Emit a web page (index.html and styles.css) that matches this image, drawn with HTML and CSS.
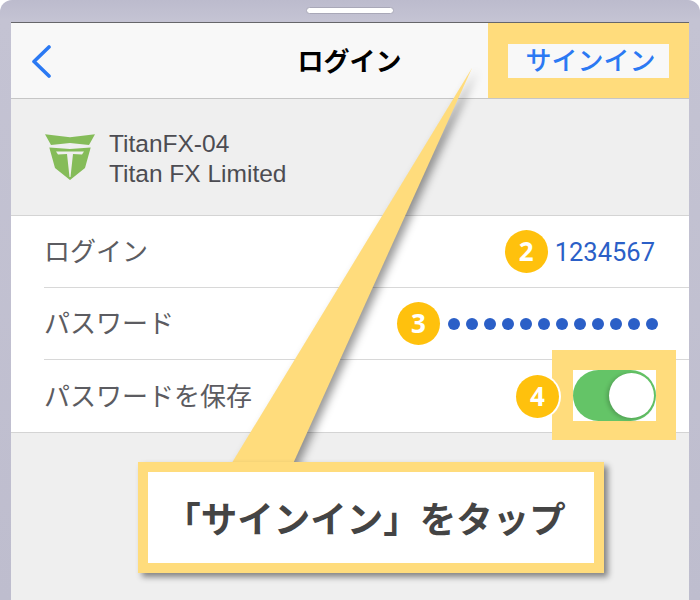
FILE: index.html
```html
<!DOCTYPE html>
<html lang="ja">
<head>
    <meta charset="UTF-8">
    <meta name="viewport" content="width=device-width, initial-scale=1.0">
    <title>ログイン</title>
    <link rel="stylesheet" href="styles.css">
</head>
<body>
    <div class="phone">
        <div class="speaker"></div>
        <div class="screen">
            <div class="nav">
                <div class="nav-back">
                    <svg width="24" height="34" viewBox="0 0 24 34"><path d="M20 3 L5 17.5 L20 32" fill="none" stroke="#2b79f3" stroke-width="3.6" stroke-linecap="round" stroke-linejoin="round"/></svg>
                </div>
                <div class="nav-title">ログイン</div>
                <div class="nav-action"><span class="nav-signin">サインイン</span></div>
            </div>
            <div class="server">
                <svg class="server-logo" width="52" height="48" viewBox="0 0 52 48">
                    <path d="M1 1.300 L26 4.300 L51 1.300 L45 12 L26 10 L7 12 Z" fill="#85bc59"/>
                    <path d="M5.300 14.500 L26 16 L46.700 14.500 L41 35 L26 47 L11 35 Z" fill="#85bc59"/>
                    <path d="M12 18.500 L40 18.500 L38 21.500 L29 21 L26.500 44 L25.500 44 L23 21 L14 21.500 Z" fill="#efefef"/>
                </svg>
                <div class="server-text">
                    <div>TitanFX-04</div>
                    <div>Titan FX Limited</div>
                </div>
            </div>
            <div class="form">
                <div class="row">
                    <span class="row-label">ログイン</span>
                    <span class="badge">2</span>
                    <span class="row-value">1234567</span>
                </div>
                <div class="row">
                    <span class="row-label">パスワード</span>
                    <span class="badge">3</span>
                    <span class="dots">
                        <i></i><i></i><i></i><i></i><i></i><i></i><i></i><i></i><i></i><i></i><i></i><i></i>
                    </span>
                </div>
                <div class="row row-last">
                    <span class="row-label">パスワードを保存</span>
                    <span class="badge badge-ring">4</span>
                    <span class="toggle-mark"><span class="toggle"><span class="knob"></span></span></span>
                </div>
            </div>
        </div>
        <svg class="pointer" width="700" height="600" viewBox="0 0 700 600"><polygon points="472,68 292,466 230,466" fill="#ffdc7c"/></svg>
        <div class="callout">「サインイン」をタップ</div>
    </div>
</body>
</html>
```

FILE: styles.css
```css
html, body {
    margin: 0;
    height: 600px;
    overflow: hidden;
}
body {
    font-family: 'Noto Sans CJK JP', sans-serif;
    background-color: #ffffff;
}
.phone {
    position: relative;
    height: 600px;
    box-sizing: border-box;
    padding: 22px 11px 0;
    background: linear-gradient(#bcbbcd, #c4c3d3 20px, #bebdce);
    border-radius: 12px 12px 0 0;
}
.speaker {
    position: absolute;
    top: 7px;
    left: 306px;
    width: 86px;
    height: 5px;
    background: #ffffff;
    border: 1px solid #a9a8b8;
    border-radius: 4px;
}
.screen {
    height: 578px;
    border-top: 1px solid #66666a;
    background-color: #efefef;
}
.nav {
    display: flex;
    align-items: stretch;
    height: 75px;
    background-color: #f8f8f8;
    border-bottom: 1px solid #c6c6c6;
}
.nav-back {
    width: 200px;
    display: flex;
    align-items: center;
    padding-left: 18px;
    box-sizing: border-box;
}
.nav-title {
    width: 277px;
    text-align: center;
    line-height: 73px;
    font-size: 26px;
    font-weight: 700;
    color: #000000;
}
.nav-action {
    flex: 1;
    background-color: #ffdc7c;
    display: flex;
    align-items: center;
    justify-content: center;
}
.nav-signin {
    width: 161px;
    height: 34px;
    line-height: 30px;
    text-align: center;
    text-indent: 4px;
    background-color: #f8f8f8;
    color: #2b79f3;
    font-size: 26px;
    font-weight: 500;
}
.server {
    display: flex;
    align-items: center;
    height: 116px;
    padding-left: 33px;
    border-bottom: 1px solid #d4d4d4;
}
.server-logo {
    margin-right: 13px;
}
.server-text {
    padding-top: 3px;
    font-family: 'Liberation Sans', sans-serif;
    font-size: 24.5px;
    line-height: 30px;
    color: #4c4c52;
}
.form {
    background: #ffffff;
    border-bottom: 1px solid #d4d4d4;
    padding-left: 33px;
}
.row {
    display: flex;
    align-items: center;
    height: 71px;
    padding-right: 33px;
    border-bottom: 1px solid #d8d8d8;
}
.row-last {
    height: 72px;
    border-bottom: none;
}
.row-label {
    flex: 1;
    padding-bottom: 4px;
    font-size: 26px;
    font-weight: 400;
    color: #5c5c61;
}
.row-value {
    margin-right: 1px;
    font-family: Roboto, sans-serif;
    font-size: 25.5px;
    color: #2b5fc7;
}
.badge {
    width: 43px;
    height: 43px;
    border-radius: 50%;
    background-color: #ffc10d;
    color: #ffffff;
    font-family: 'Open Sans', sans-serif;
    font-weight: 700;
    font-size: 26px;
    line-height: 43px;
    text-align: center;
    margin-right: 7px;
}
.badge-ring {
    position: relative;
    z-index: 1;
    box-shadow: 0 0 0 2px #ffffff;
    margin-right: -7px;
}
.dots {
    display: flex;
    gap: 6px;
    margin-right: -2px;
    margin-left: 1px;
}
.dots i {
    width: 12px;
    height: 12px;
    border-radius: 50%;
    background-color: #2b5fc7;
}
.toggle-mark {
    border: solid #ffdc7c;
    border-width: 20px 20px 19px 21px;
    margin: -2px -20px 0 0;
    background: #ffffff;
    display: flex;
}
.toggle {
    display: flex;
    justify-content: flex-end;
    align-items: center;
    width: 83px;
    height: 51px;
    border-radius: 26px;
    box-sizing: border-box;
    padding-right: 2px;
    background-color: #64c467;
}
.knob {
    width: 45px;
    height: 45px;
    border-radius: 50%;
    background-color: #ffffff;
    box-shadow: -2px 1px 4px rgba(0, 0, 0, 0.2);
}
.pointer {
    position: absolute;
    top: 0;
    left: 0;
    filter: drop-shadow(5px 3px 4px rgba(0, 0, 0, 0.4));
}
.callout {
    position: absolute;
    left: 138px;
    top: 462px;
    width: 446px;
    height: 91px;
    box-sizing: content-box;
    line-height: 91px;
    border: 10px solid #ffdc7c;
    background-color: #ffffff;
    box-shadow: 4px 4px 6px rgba(0, 0, 0, 0.45);
    text-align: center;
    text-indent: -12px;
    font-size: 36.5px;
    font-weight: 700;
    color: #444444;
    white-space: nowrap;
}
```
